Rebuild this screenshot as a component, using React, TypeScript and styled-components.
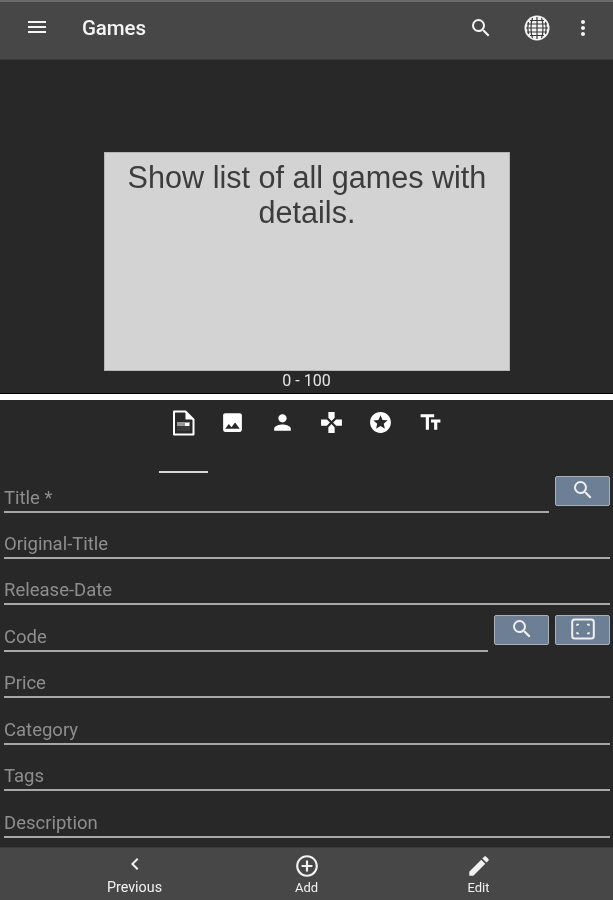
import React from "react";
import styled, { createGlobalStyle } from "styled-components";
import {
  MdMenu, MdSearch, MdMoreVert, MdImage, MdPerson, MdGamepad, MdStars,
  MdTextFields, MdChevronLeft, MdAddCircleOutline, MdEdit,
} from "react-icons/md";

const Global = createGlobalStyle`
  html, body { margin: 0; padding: 0; background: #282828; }
  body { font-family: Roboto, "Liberation Sans", sans-serif; }
`;

const Page = styled.div`
  width: 613px;
  height: 900px;
  display: flex;
  flex-direction: column;
  background: #282828;
  overflow: hidden;
  filter: blur(0.45px);
`;

const TopBar = styled.header`
  height: 60px;
  flex: none;
  box-sizing: border-box;
  display: flex;
  align-items: center;
  padding-right: 18px;
  background: #474747;
  border-top: 2px solid #6a6a6a;
  border-bottom: 1px solid #3a3a3a;
  color: #f4f4f4;
`;

const MenuSlot = styled.div`
  width: 82px;
  padding-left: 25px;
  box-sizing: border-box;
  display: flex;
  margin-top: -7px;
`;

const Title = styled.h1`
  flex: 1;
  margin: -5px 0 0;
  font-size: 20.5px;
  font-weight: 500;
  letter-spacing: -0.1px;
`;

const TopIcon = styled.div<{ $ml?: number }>`
  flex: none;
  display: flex;
  margin-top: -6px;
  margin-left: ${(p) => p.$ml ?? 0}px;
`;

const PosterArea = styled.section`
  height: 333px;
  flex: none;
  display: flex;
  flex-direction: column;
  align-items: center;
  padding-top: 92px;
  box-sizing: border-box;
`;

const Poster = styled.div`
  width: 406px;
  height: 219px;
  margin-left: 1px;
  flex: none;
  background: #d3d3d3;
  border: 1px solid #b5b5b5;
  box-sizing: border-box;
  color: #3c3c3c;
  font-family: "Liberation Sans", Arial, sans-serif;
  font-size: 30.6px;
  line-height: 35px;
  text-align: center;
  padding: 7px 10px 0;
`;

const Range = styled.div`
  color: #e6e6e6;
  font-size: 16px;
  line-height: 19px;
`;

const Divider = styled.div`
  height: 6px;
  flex: none;
  background: #fff;
  border-top: 1px solid #000;
`;

const Tabs = styled.nav`
  height: 76px;
  flex: none;
  box-sizing: border-box;
  display: flex;
  padding-left: 159px;
`;

const Tab = styled.div<{ $active?: boolean }>`
  width: 49.3px;
  height: 73px;
  box-sizing: border-box;
  padding-top: 9.5px;
  display: flex;
  justify-content: center;
  align-items: flex-start;
  color: #fff;
  border-bottom: 2px solid ${(p) => (p.$active ? "#d8d8d8" : "transparent")};
`;

const Form = styled.div`
  flex: 1;
  display: flex;
  flex-direction: column;
  padding: 0 3px 0 4px;
`;

const Row = styled.div<{ $first?: boolean }>`
  height: ${(p) => (p.$first ? "36.6px" : "46.45px")};
  flex: none;
  display: flex;
  gap: 6px;
  align-items: flex-start;
`;

const Field = styled.div`
  flex: 1;
  height: 100%;
  box-sizing: border-box;
  display: flex;
  align-items: flex-end;
  padding-bottom: 2px;
  border-bottom: 2px solid #a8a8a8;
  color: #8e8e8e;
  font-size: 18.5px;
  line-height: 22px;
`;

const ActionButton = styled.button<{ $first?: boolean }>`
  width: 55px;
  height: 30px;
  flex: none;
  margin-top: ${(p) => (p.$first ? 0 : 10)}px;
  padding: 0 0 2px;
  display: flex;
  align-items: center;
  justify-content: center;
  background: #6d7f94;
  border: 1px solid #a9b0b8;
  border-radius: 2px;
  color: #f0f0f0;
`;

const BottomBar = styled.footer`
  height: 53px;
  flex: none;
  display: grid;
  grid-template-columns: repeat(3, 172px);
  justify-content: center;
  background: #474747;
  border-top: 1px solid #3a3a3a;
  box-sizing: border-box;
`;

const BottomItem = styled.div<{ $large?: boolean }>`
  display: flex;
  flex-direction: column;
  align-items: center;
  color: #f2f2f2;
  font-size: ${(p) => (p.$large ? 14.3 : 13)}px;
  line-height: 15px;
  padding-top: 5px;
`;

const IconBox = styled.div<{ $lift?: boolean }>`
  height: 27px;
  box-sizing: border-box;
  padding-bottom: ${(p) => (p.$lift ? 5 : 1)}px;
  display: flex;
  align-items: center;
  justify-content: center;
`;

const Globe = () => (
  <svg width="26" height="26" viewBox="0 0 26 26" fill="none">
    <circle cx="13" cy="13" r="12.5" fill="#f4f4f4" />
    <g stroke="#3a3a3a" strokeWidth="1.2">
      <path d="M3 9h20M2 13h22M3 17h20M6 5.5h14M6 20.5h14" />
      <path d="M13 2v22M8.5 3C6.5 8 6.5 18 8.5 23M17.5 3c2 5 2 15 0 20M4.5 7c-1 4-1 8 0 12M21.5 7c1 4 1 8 0 12" />
    </g>
  </svg>
);

const DocImage = () => (
  <svg width="24" height="26" viewBox="0 0 24 26" fill="none">
    <path d="M2 1.5h11.5L21.5 9.5v15H2z" fill="#282828" stroke="#fff" strokeWidth="2" strokeLinejoin="round" />
    <path d="M13.5 1.5v8h8z" fill="#fff" />
    <rect x="5" y="12" width="13" height="9" fill="#f0f0f0" opacity="0.55" />
    <rect x="5" y="16" width="13" height="5" fill="#3a3a3a" />
    <rect x="13" y="13" width="4" height="3" fill="#fff" />
  </svg>
);

const ScanFrame = () => (
  <svg width="24" height="22" viewBox="0 0 24 22" fill="none" stroke="#f0f0f0">
    <rect x="1.2" y="1.5" width="21.6" height="19" rx="2.5" strokeWidth="2" />
    <path d="M6 8V6.5h2M16 6.5h2V8M6 14v1.5h2M18 14v1.5h-2" strokeWidth="1.3" />
  </svg>
);

const rows: { label: string; first?: boolean; search?: boolean; scan?: boolean }[] = [
  { label: "Title *", first: true, search: true },
  { label: "Original-Title" },
  { label: "Release-Date" },
  { label: "Code", search: true, scan: true },
  { label: "Price" },
  { label: "Category" },
  { label: "Tags" },
  { label: "Description" },
];

export default function App() {
  return (
    <Page>
      <Global />
      <TopBar>
        <MenuSlot><MdMenu size={24} /></MenuSlot>
        <Title>Games</Title>
        <TopIcon><MdSearch size={24} /></TopIcon>
        <TopIcon $ml={31}><Globe /></TopIcon>
        <TopIcon $ml={21}><MdMoreVert size={24} /></TopIcon>
      </TopBar>
      <PosterArea>
        <Poster>Show list of all games with details.</Poster>
        <Range>0 - 100</Range>
      </PosterArea>
      <Divider />
      <Tabs>
        <Tab $active><DocImage /></Tab>
        <Tab><MdImage size={25} /></Tab>
        <Tab><MdPerson size={25} /></Tab>
        <Tab><MdGamepad size={25} /></Tab>
        <Tab><MdStars size={25} /></Tab>
        <Tab><MdTextFields size={25} /></Tab>
      </Tabs>
      <Form>
        {rows.map((r) => (
          <Row key={r.label} $first={r.first}>
            <Field>{r.label}</Field>
            {r.search && <ActionButton $first={r.first} aria-label="Search"><MdSearch size={24} /></ActionButton>}
            {r.scan && <ActionButton aria-label="Scan"><ScanFrame /></ActionButton>}
          </Row>
        ))}
      </Form>
      <BottomBar>
        <BottomItem $large><IconBox $lift><MdChevronLeft size={24} /></IconBox>Previous</BottomItem>
        <BottomItem><IconBox><MdAddCircleOutline size={26} /></IconBox>Add</BottomItem>
        <BottomItem><IconBox><MdEdit size={26} /></IconBox>Edit</BottomItem>
      </BottomBar>
    </Page>
  );
}
